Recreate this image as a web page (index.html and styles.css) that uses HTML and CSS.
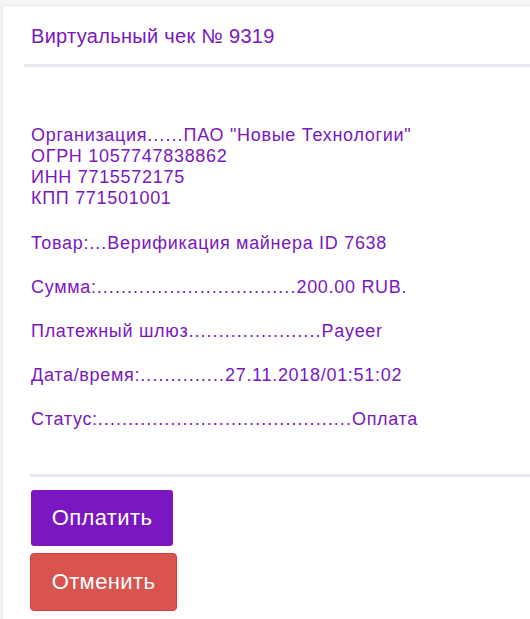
FILE: index.html
```html
<!DOCTYPE html>
<html lang="ru">
<head>
<meta charset="utf-8">
<title>Виртуальный чек</title>
<link rel="stylesheet" href="styles.css">
</head>
<body>
<div class="card">
  <div class="card-header">Виртуальный чек № 9319</div>
  <div class="card-body">
    <p class="block">Организация<span class="dots">......</span>ПАО "Новые Технологии"<br>ОГРН 1057747838862<br>ИНН 7715572175<br>КПП 771501001</p>
    <p class="row">Товар:<span class="dots">...</span>Верификация майнера ID 7638</p>
    <p class="row">Сумма:<span class="dots">.................................</span>200.00 RUB.</p>
    <p class="row">Платежный шлюз<span class="dots">......................</span>Payeer</p>
    <p class="row">Дата/время:<span class="dots">..............</span>27.11.2018/01:51:02</p>
    <p class="row">Статус:<span class="dots">..........................................</span>Оплата</p>
  </div>
  <div class="card-footer">
    <button class="btn btn-pay">Оплатить</button>
    <button class="btn btn-cancel">Отменить</button>
  </div>
</div>
</body>
</html>
```
FILE: styles.css
```css
html, body {
  margin: 0;
  padding: 0;
}
body {
  background: #f6f6f8;
  padding: 5px 0 0 2px;
  font-family: "Liberation Sans", Arial, sans-serif;
  color: #7a17c0;
}
.card {
  background: #fff;
  border: 1px solid #e9e9ef;
  border-right: none;
  border-bottom: none;
  min-height: 620px;
}
.card-header {
  margin-left: 21px;
  padding: 19px 7px 17px;
  font-size: 20px;
  line-height: 22px;
  letter-spacing: 0.3px;
  border-bottom: 3px solid #e6e9ef;
}
.card-body {
  padding: 58px 0 0 28px;
  font-size: 18px;
  line-height: 21px;
  letter-spacing: 0.7px;
}
.card-body .dots {
  letter-spacing: 1.05px;
}
.card-body p {
  margin: 0 0 23px;
}
.card-body p.block {
  margin-bottom: 24px;
}
.card-body p:last-child {
  margin-bottom: 0;
}
.card-footer {
  margin-left: 27px;
  margin-top: 44px;
  border-top: 3px solid #e6e9ef;
  padding-top: 13px;
  display: flex;
  flex-direction: column;
  align-items: flex-start;
  gap: 7px;
}
.btn {
  font-family: "Liberation Sans", Arial, sans-serif;
  font-size: 22px;
  letter-spacing: 0.4px;
  color: #fff;
  border-radius: 3px;
  cursor: pointer;
  padding: 0;
}
.btn-pay {
  background: #7a17c0;
  border: none;
  width: 142px;
  height: 56px;
  margin-left: 1px;
}
.btn-cancel {
  background: #d9534f;
  border: 1px solid #d43f3a;
  border-radius: 4px;
  width: 147px;
  height: 58px;
}
```
